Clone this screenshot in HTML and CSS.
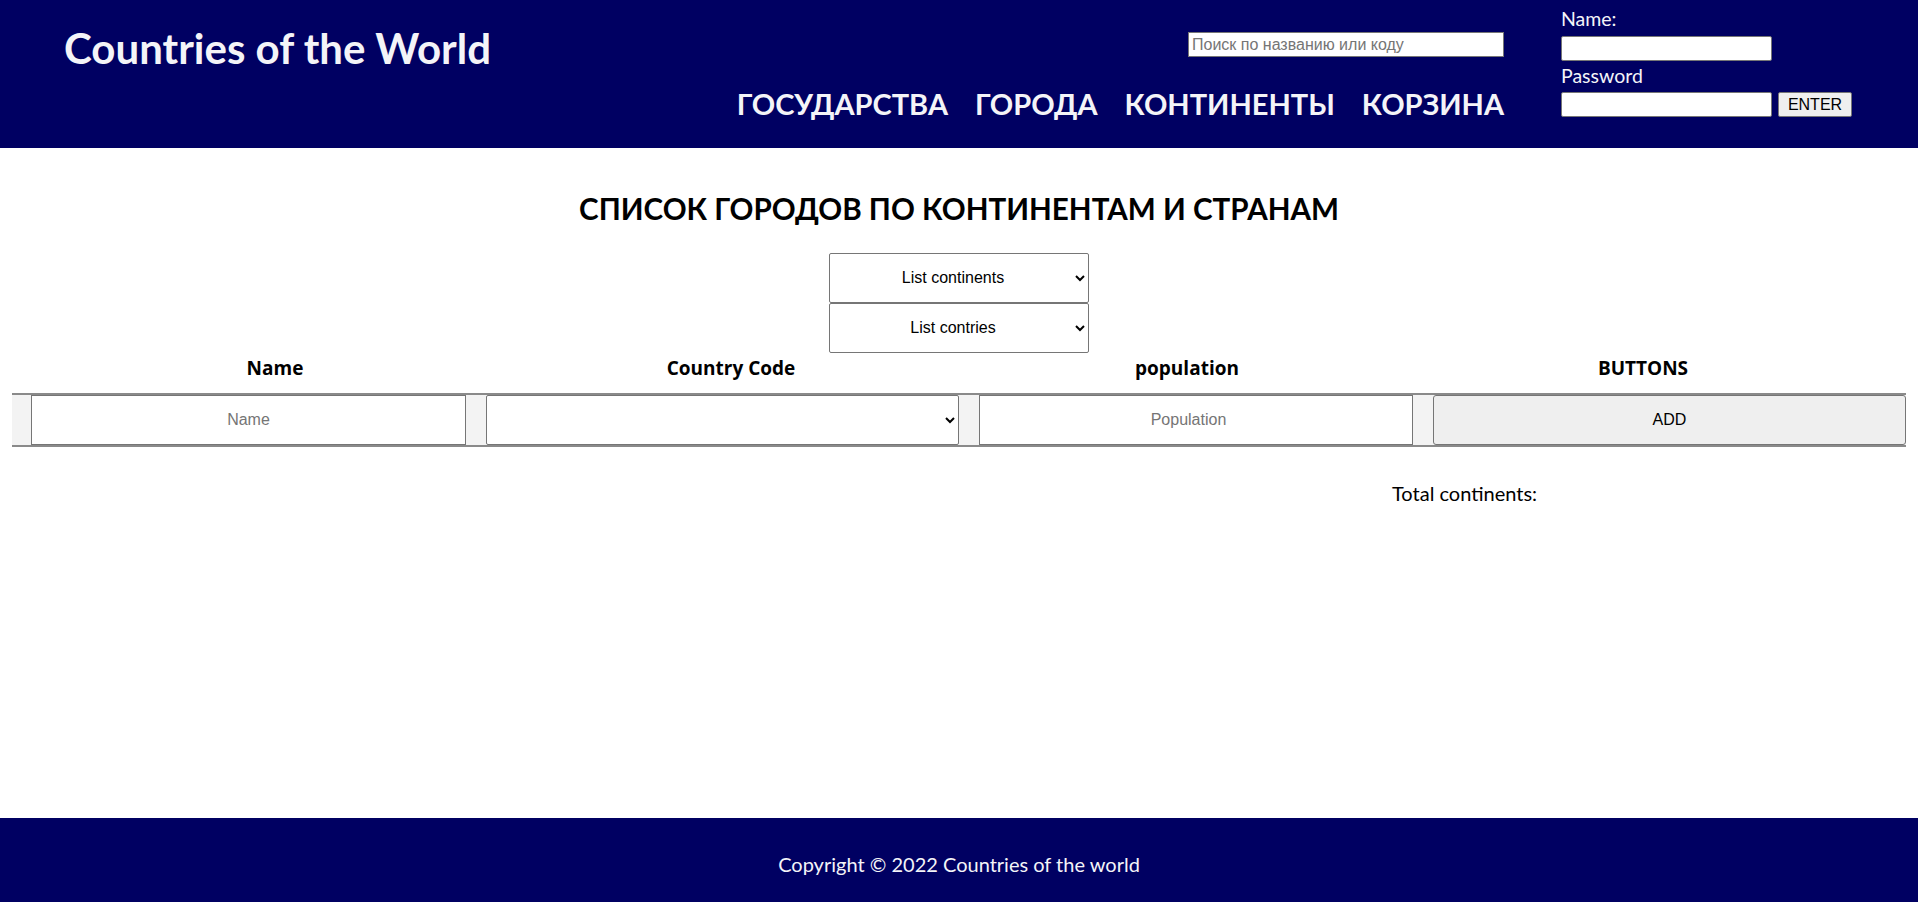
FILE: index.html
```html
<!DOCTYPE html>
<html lang="ru">
<head>
<meta charset="utf-8">
<title>Countries of the World</title>
<link rel="stylesheet" href="styles.css">
</head>
<body>
<div class="page">
  <header class="site-header">
    <div class="brand">Countries of the World</div>
    <div class="header-right">
      <div class="search-nav">
        <input class="search" type="text" placeholder="Поиск по названию или коду">
        <nav class="nav">
          <a href="#">ГОСУДАРСТВА</a>
          <a href="#">ГОРОДА</a>
          <a href="#">КОНТИНЕНТЫ</a>
          <a href="#">КОРЗИНА</a>
        </nav>
      </div>
      <form class="login">
        <label class="login-label">Name:</label>
        <input class="login-input" type="text">
        <label class="login-label login-label-pass">Password</label>
        <div class="login-row">
          <input class="login-input" type="password">
          <button class="enter" type="button">ENTER</button>
        </div>
      </form>
    </div>
  </header>

  <main class="main">
    <h2 class="title">СПИСОК ГОРОДОВ ПО КОНТИНЕНТАМ И СТРАНАМ</h2>
    <div class="filters">
      <select class="filter"><option>List continents</option></select>
      <select class="filter"><option>List contries</option></select>
    </div>
    <div class="table-head">
      <div class="th">Name</div>
      <div class="th">Country Code</div>
      <div class="th">population</div>
      <div class="th">BUTTONS</div>
    </div>
    <div class="table-row">
      <input class="cell-input" type="text" placeholder="Name">
      <select class="cell-select"><option></option></select>
      <input class="cell-input" type="number" placeholder="Population">
      <button class="cell-button" type="button">ADD</button>
    </div>
    <div class="total">Total continents:</div>
  </main>

  <footer class="site-footer">Copyright © 2022 Countries of the world</footer>
</div>
</body>
</html>
```

FILE: styles.css
```css
* { box-sizing: border-box; }

html, body {
  margin: 0;
  padding: 0;
}

body {
  font-family: "Lato", "Open Sans", sans-serif;
  color: #000;
  background: #fff;
}

.page {
  min-height: 100vh;
  display: flex;
  flex-direction: column;
}

/* Header */
.site-header {
  height: 148px;
  background: #000062;
  color: #fff;
  display: flex;
  justify-content: space-between;
  align-items: flex-start;
  padding-left: 64px;
  padding-right: 63px;
}

.brand {
  font-size: 42px;
  font-weight: 700;
  line-height: 1.2;
  padding-top: 23px;
  color: #f4f4f8;
}

.header-right {
  display: flex;
  align-items: flex-start;
  gap: 57px;
}

.search-nav {
  display: flex;
  flex-direction: column;
  align-items: flex-end;
}

.search {
  margin-top: 32px;
  width: 316px;
  height: 25px;
  border: 1px solid #767676;
  padding: 1px 3px;
  font-family: "Liberation Sans", Arial, sans-serif;
  font-size: 16px;
  background: #fff;
}

.search::placeholder { color: #757575; }

.nav {
  margin-top: 30px;
  display: flex;
  gap: 27px;
  font-size: 29px;
  font-weight: 700;
  line-height: 1.2;
}

.nav a {
  color: #f4f4f8;
  text-decoration: none;
}

.login {
  display: flex;
  flex-direction: column;
  align-items: flex-start;
  width: 294px;
  padding-top: 6px;
  font-size: 19.5px;
  line-height: 26px;
}

.login-label { color: #f4f4f8; }

.login-input {
  width: 211px;
  height: 25px;
  border: 1px solid #767676;
  border-radius: 2px;
  background: #fff;
  padding: 1px 3px;
  margin-top: 4px;
}

.login-label-pass { margin-top: 2px; }

.login-row {
  display: flex;
  gap: 6px;
  margin-top: 3px;
}

.login-row .login-input { margin-top: 0; }

.enter {
  width: 74px;
  height: 25px;
  border: 1px solid #767676;
  border-radius: 2px;
  background: #efefef;
  font-family: "Liberation Sans", Arial, sans-serif;
  font-size: 16px;
  color: #000;
  padding: 0;
}

/* Main */
.main {
  flex: 1;
  display: flex;
  flex-direction: column;
}

.title {
  margin: 43px 0 0;
  font-size: 29.6px;
  font-weight: 700;
  line-height: 1.2;
  text-align: center;
}

.filters {
  margin-top: 26px;
  display: flex;
  flex-direction: column;
  align-items: center;
}

.filter {
  width: 260px;
  height: 50px;
  border: 1px solid #767676;
  border-radius: 2px;
  background: #fff;
  font-family: "Liberation Sans", Arial, sans-serif;
  font-size: 16px;
  color: #000;
  text-align: center;
  text-align-last: center;
}

.table-head {
  margin: 4px auto 0;
  width: 1824px;
  display: grid;
  grid-template-columns: repeat(4, 1fr);
  font-family: "Open Sans", "Lato", sans-serif;
  font-size: 19px;
  font-weight: 700;
  line-height: 1.2;
}

.th { text-align: center; }

.table-row {
  margin: 14px 12px 0;
  display: grid;
  grid-template-columns: 435px 473px 434px 1fr;
  column-gap: 20px;
  padding: 0 0 0 19px;
  background: #f3f3f3;
  border-top: 2px solid #8a8a8a;
  border-bottom: 2px solid #8a8a8a;
}

.cell-input,
.cell-select,
.cell-button {
  height: 50px;
  border: 1px solid #767676;
  font-family: "Liberation Sans", Arial, sans-serif;
  font-size: 16px;
  color: #000;
}

.cell-input {
  background: #fff;
  text-align: center;
  border-radius: 0;
}

.cell-input::placeholder { color: #757575; }

.cell-select {
  background: #fff;
  border-radius: 2px;
}

.cell-button {
  background: #efefef;
  border-radius: 3px;
}

.total {
  margin-top: 34px;
  padding-left: 1392px;
  font-size: 20px;
  line-height: 1.2;
}

/* Footer */
.site-footer {
  height: 84px;
  background: #000062;
  color: #f4f4f8;
  text-align: center;
  font-size: 20px;
  line-height: 1.2;
  padding-top: 34px;
}
```
